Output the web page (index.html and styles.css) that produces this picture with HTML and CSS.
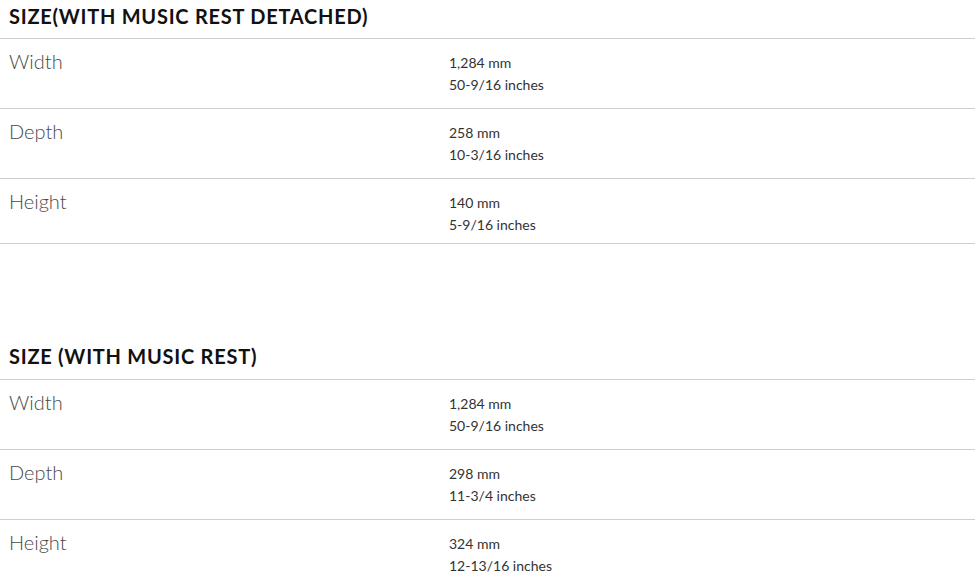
FILE: index.html
```html
<!DOCTYPE html>
<html>
<head>
<meta charset="utf-8">
<link rel="stylesheet" href="styles.css">
</head>
<body>
<section class="spec">
  <h2 class="spec-title">SIZE(WITH MUSIC REST DETACHED)</h2>
  <div class="spec-row">
    <div class="spec-label">Width</div>
    <div class="spec-value"><div>1,284 mm</div><div>50-9/16 inches</div></div>
  </div>
  <div class="spec-row">
    <div class="spec-label">Depth</div>
    <div class="spec-value"><div>258 mm</div><div>10-3/16 inches</div></div>
  </div>
  <div class="spec-row spec-row-last">
    <div class="spec-label">Height</div>
    <div class="spec-value"><div>140 mm</div><div>5-9/16 inches</div></div>
  </div>
</section>
<section class="spec spec-second">
  <h2 class="spec-title">SIZE (WITH MUSIC REST)</h2>
  <div class="spec-row">
    <div class="spec-label">Width</div>
    <div class="spec-value"><div>1,284 mm</div><div>50-9/16 inches</div></div>
  </div>
  <div class="spec-row">
    <div class="spec-label">Depth</div>
    <div class="spec-value"><div>298 mm</div><div>11-3/4 inches</div></div>
  </div>
  <div class="spec-row spec-row-last">
    <div class="spec-label">Height</div>
    <div class="spec-value"><div>324 mm</div><div>12-13/16 inches</div></div>
  </div>
</section>
</body>
</html>
```
FILE: styles.css
```css
html, body {
  margin: 0;
  padding: 0;
  background: #fff;
}
body {
  font-family: "Lato", "Liberation Sans", sans-serif;
  color: #333;
  width: 975px;
  overflow: hidden;
}
.spec-second {
  margin-top: 96px;
}
.spec-title {
  margin: 0;
  padding: 4px 0 10px 9px;
  font-size: 20px;
  line-height: 24px;
  font-weight: 700;
  color: #111;
  letter-spacing: 0.75px;
  border-bottom: 1px solid #cfcfcf;
}
.spec-second .spec-title {
  padding-bottom: 11px;
}
.spec-row {
  display: grid;
  grid-template-columns: 440px 1fr;
  padding-left: 9px;
  height: 69px;
  border-bottom: 1px solid #cfcfcf;
}
.spec-row-last {
  height: 64px;
}
.spec-label {
  padding-top: 10px;
  font-size: 20px;
  line-height: 24px;
  font-weight: 300;
  color: #4a4a4a;
}
.spec-value {
  padding-top: 13px;
  font-size: 14px;
  line-height: 22px;
  color: #333;
}
```
